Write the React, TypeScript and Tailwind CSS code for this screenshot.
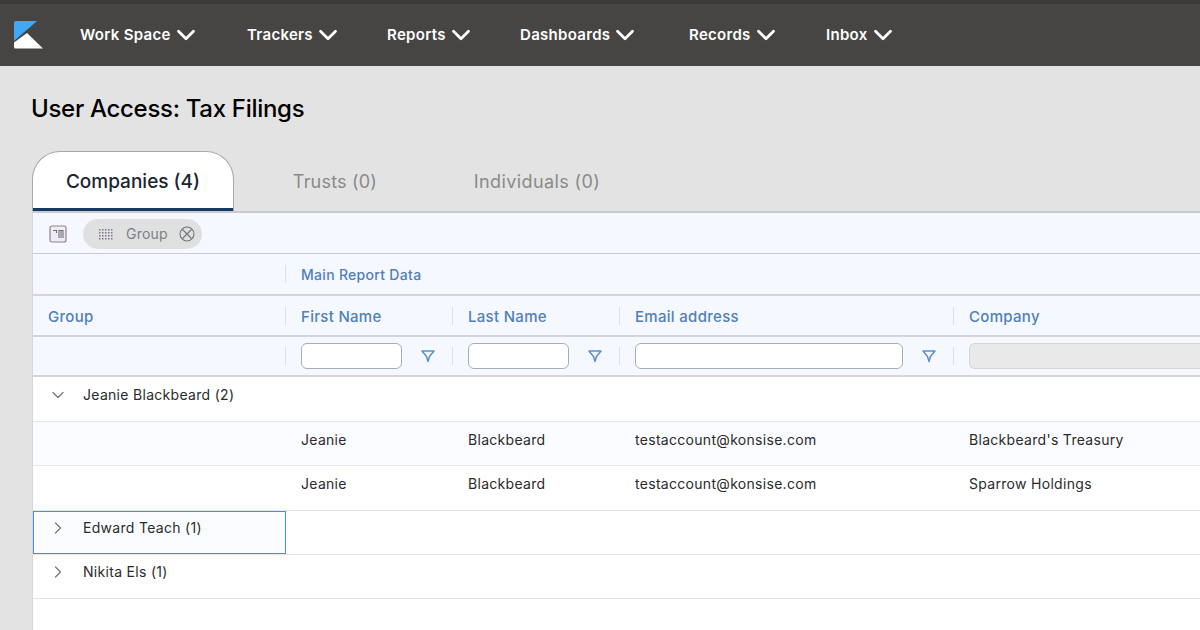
import { ChevronDown, ChevronRight } from "lucide-react";

const font = "font-['Inter','Liberation_Sans',sans-serif]";
const navItems = ["Work Space", "Trackers", "Reports", "Dashboards", "Records", "Inbox"];
const navWidths = ["w-[167px]", "w-[140px]", "w-[133px]", "w-[169px]", "w-[137px]", "w-auto"];
const rowCols = "grid grid-cols-[252px_167px_167px_334px_1fr]";

const Logo = () => (
  <svg width="31" height="30" viewBox="0 0 31 30">
    <path d="M3.5 1 H25 L2 21 V2.5 Q2 1 3.5 1 Z" fill="#3fa9f5" />
    <path d="M2 22.5 L15 13 L31 28.5 H3.5 Q2 28.5 2 27 Z" fill="#ffffff" />
  </svg>
);

const Funnel = () => (
  <svg width="14" height="13" viewBox="0 0 14 13" fill="none" stroke="#5b8fd0" strokeWidth="1.5" strokeLinejoin="round">
    <path d="M1 1 H13 L8.5 6.5 L7 11.5 L5.5 6.5 Z" />
  </svg>
);

const Sep = ({ h = "h-[18px]" }: { h?: string }) => <span className={`w-px ${h} bg-[#dcdfe4] shrink-0`} />;

const HeaderCell = ({ label }: { label: string }) => (
  <div className="flex items-center">
    <Sep />
    <span className="ml-[15px] pt-[3px] text-[15px] font-medium tracking-[0.3px] text-[#5080b8]">{label}</span>
  </div>
);

const FilterCell = ({ w }: { w: string }) => (
  <div className="flex items-center">
    <Sep />
    <span className={`ml-[15px] ${w} h-[26px] rounded-[6px] border border-[#a3b0b0] bg-white`} />
    <span className="ml-[19px] flex">
      <Funnel />
    </span>
  </div>
);

const DataRow = ({ company, tint, h }: { company: string; tint?: boolean; h: string }) => (
  <div className={`${rowCols} ${h} items-center border-b border-[#e2e4e8] pb-[9px] text-[14px] tracking-[0.3px] text-[#2b2b2b] ${tint ? "bg-[#fbfcff]" : "bg-white"}`}>
    <span />
    <span className="pl-4">Jeanie</span>
    <span className="pl-4">Blackbeard</span>
    <span className="pl-4">testaccount@konsise.com</span>
    <span className="pl-4">{company}</span>
  </div>
);

export default function App() {
  return (
    <div className={`${font} w-[1200px] h-[630px] overflow-hidden bg-[#e3e3e3] flex flex-col`}>
      <header className="h-[66px] shrink-0 bg-[#474543] border-t-4 border-[#3a3a3a] flex items-center">
        <span className="ml-[12px] w-[68px] flex">
          <Logo />
        </span>
        {navItems.map((item, i) => (
          <div key={item} className={`${navWidths[i]} flex items-center text-white text-[15px] font-semibold tracking-[0.3px]`}>
            <span>{item}</span>
            <ChevronDown size={30} strokeWidth={2.2} />
          </div>
        ))}
      </header>

      <h1 className="ml-[31px] mt-[25px] h-[36px] text-[24px] leading-[36px] font-medium text-black tracking-[-0.3px]">User Access: Tax Filings</h1>

      <div className="ml-[32px] mt-[24px] h-[60px] flex items-stretch text-[18px]">
        <div className="w-[202px] pt-[2px] rounded-t-[28px] bg-white border border-b-0 border-[#a8a8a8] flex items-center justify-center text-[19px] font-medium text-[#1c2530] shadow-[inset_0_-3px_0_#163a5f]">
          Companies (4)
        </div>
        <div className="w-[202px] flex items-center justify-center tracking-[0.2px] text-[#8a8a8a]">Trusts (0)</div>
        <div className="w-[202px] flex items-center justify-center tracking-[0.4px] text-[#8a8a8a]">Individuals (0)</div>
      </div>

      <main className="ml-[32px] flex-1 flex flex-col bg-white border-l border-t-2 border-l-[#d5d7da] border-t-[#c8cacd]">
        <div className="h-[41px] shrink-0 bg-[#f6f8ff] border-b border-[#c9cbce] flex items-center pl-[16px] pt-[1px]">
          <svg width="18" height="18" viewBox="0 0 18 18" fill="none">
            <rect x="1" y="1" width="16" height="16" rx="2" fill="#efecf2" stroke="#8f7f95" strokeWidth="1.2" />
            <path d="M4 5.5 H7.5 V8 M9.5 5.5 H14.5 M10 5.5 V13 M12 5.5 V13 M14 5.5 V13" stroke="#6f6f78" strokeWidth="1.1" />
          </svg>
          <div className="ml-[16px] w-[119px] h-[30px] rounded-full bg-[#dfe1e1] flex items-center pl-[15px] text-[#7b7f86] text-[14px] tracking-[0.2px]">
            <svg width="16" height="12" viewBox="0 0 16 12" fill="#85708f">
              {[1, 4, 7, 10, 13].flatMap((x) =>
                [1, 4, 7, 10].map((y) => <rect key={`${x}-${y}`} x={x} y={y} width="1.5" height="1.5" />)
              )}
            </svg>
            <span className="ml-[12px]">Group</span>
            <svg className="ml-[11px]" width="16" height="16" viewBox="0 0 16 16" fill="none" stroke="#6f7378" strokeWidth="1.1">
              <circle cx="8" cy="8" r="7" />
              <path d="M3.5 3.5 L12.5 12.5 M12.5 3.5 L3.5 12.5" />
            </svg>
          </div>
        </div>

        <div className={`${rowCols} h-[42px] shrink-0 bg-[#f6f8ff] border-b-2 border-[#d3d5d8] items-center`}>
          <span />
          <div className="flex items-center col-span-4">
            <Sep />
            <span className="ml-[15px] text-[14px] font-medium tracking-[0.3px] text-[#5080b8]">Main Report Data</span>
          </div>
        </div>

        <div className={`${rowCols} h-[41px] shrink-0 bg-[#f6f8ff] border-b-2 border-[#d3d5d8] items-center`}>
          <span className="pl-[15px] pt-[3px] text-[15px] font-medium tracking-[0.3px] text-[#5080b8]">Group</span>
          <HeaderCell label="First Name" />
          <HeaderCell label="Last Name" />
          <HeaderCell label="Email address" />
          <HeaderCell label="Company" />
        </div>

        <div className={`${rowCols} h-[40px] shrink-0 bg-[#f6f8ff] border-b-2 border-[#d3d5d8] items-center`}>
          <span />
          <FilterCell w="w-[101px]" />
          <FilterCell w="w-[101px]" />
          <FilterCell w="w-[268px]" />
          <div className="flex items-center">
            <Sep />
            <span className="ml-[15px] flex-1 h-[26px] rounded-l-[6px] border border-r-0 border-[#d6d6d6] bg-[#e9e9e9]" />
          </div>
        </div>

        <div className="h-[45px] shrink-0 flex items-center border-b border-[#e2e4e8] pb-[9px] text-[14px] tracking-[0.3px] text-[#2b2b2b]">
          <ChevronDown className="ml-[15px] text-[#777]" size={20} strokeWidth={1.5} />
          <span className="ml-[15px]">Jeanie Blackbeard (2)</span>
        </div>
        <DataRow company="Blackbeard's Treasury" tint h="h-[44px]" />
        <DataRow company="Sparrow Holdings" h="h-[45px]" />

        <div className="h-[44px] shrink-0 border-b border-[#e2e4e8] flex">
          <div className="w-[253px] flex items-center border border-[#3d94ee] bg-[#fbfcff] text-[14px] tracking-[0.3px] text-[#2b2b2b] pb-[10px]">
            <ChevronRight className="ml-[14px] text-[#777]" size={20} strokeWidth={1.5} />
            <span className="ml-[15px]">Edward Teach (1)</span>
          </div>
        </div>
        <div className="h-[44px] shrink-0 flex items-center border-b border-[#e2e4e8] pb-[10px] text-[14px] tracking-[0.3px] text-[#2b2b2b]">
          <ChevronRight className="ml-[15px] text-[#777]" size={20} strokeWidth={1.5} />
          <span className="ml-[15px]">Nikita Els (1)</span>
        </div>
      </main>
    </div>
  );
}
